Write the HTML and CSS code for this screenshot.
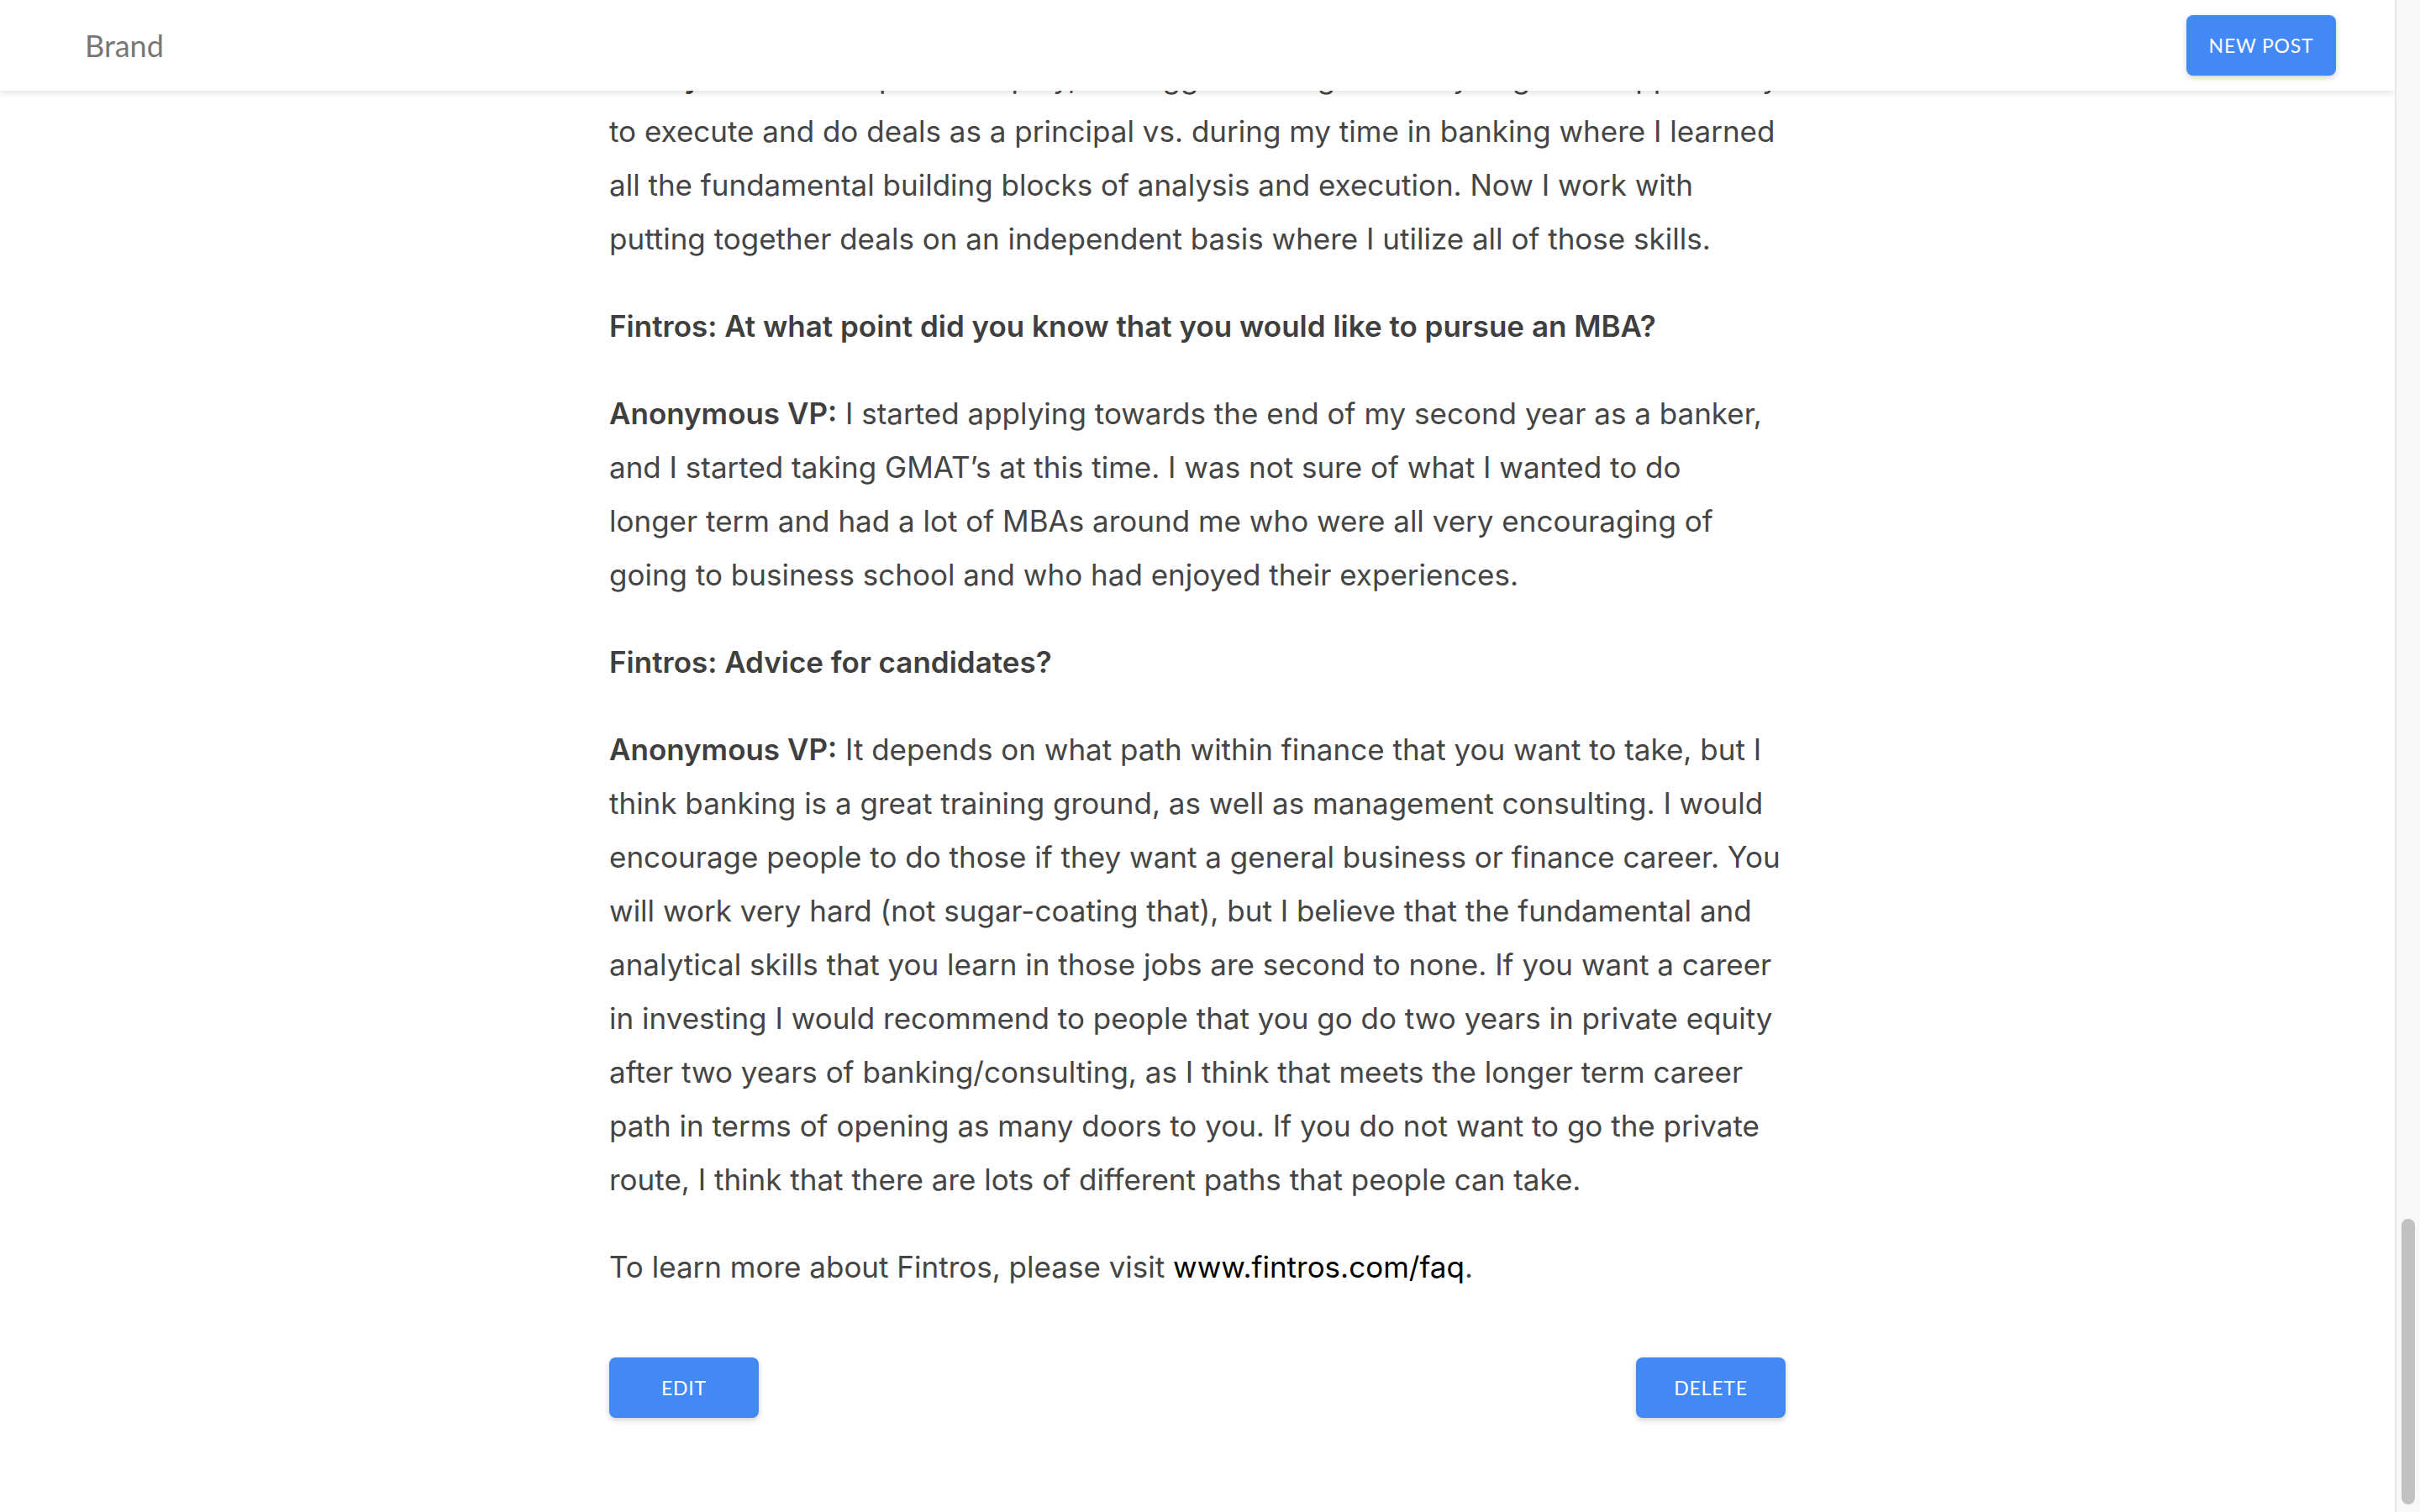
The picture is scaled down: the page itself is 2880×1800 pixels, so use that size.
FILE: index.html
```html
<!DOCTYPE html>
<html lang="en">
<head>
<meta charset="utf-8">
<title>Post</title>
<link rel="stylesheet" href="styles.css">
</head>
<body>
<div class="window">
  <div class="viewport">
    <header class="appbar">
      <div class="brand">Brand</div>
      <button class="btn">New Post</button>
    </header>
    <main class="article">
      <p><strong>Anonymous VP:</strong> In private equity, the biggest change is that you get the opportunity<br>to execute and do deals as a principal vs. during my time in banking where I learned<br>all the fundamental building blocks of analysis and execution. Now I work with<br>putting together deals on an independent basis where I utilize all of those skills.</p>
      <p class="question">Fintros: At what point did you know that you would like to pursue an MBA?</p>
      <p><strong>Anonymous VP:</strong> I started applying towards the end of my second year as a banker,<br>and I started taking GMAT’s at this time. I was not sure of what I wanted to do<br>longer term and had a lot of MBAs around me who were all very encouraging of<br>going to business school and who had enjoyed their experiences.</p>
      <p class="question">Fintros: Advice for candidates?</p>
      <p><strong>Anonymous VP:</strong> It depends on what path within finance that you want to take, but I<br>think banking is a great training ground, as well as management consulting. I would<br>encourage people to do those if they want a general business or finance career. You<br>will work very hard (not sugar-coating that), but I believe that the fundamental and<br>analytical skills that you learn in those jobs are second to none. If you want a career<br>in investing I would recommend to people that you go do two years in private equity<br>after two years of banking/consulting, as I think that meets the longer term career<br>path in terms of opening as many doors to you. If you do not want to go the private<br>route, I think that there are lots of different paths that people can take.</p>
      <p>To learn more about Fintros, please visit <a class="link" href="#">www.fintros.com/faq</a>.</p>
      <div class="actions">
        <button class="btn">Edit</button>
        <button class="btn">Delete</button>
      </div>
    </main>
  </div>
  <div class="scrollbar"><div class="thumb"></div></div>
</div>
</body>
</html>
```

FILE: styles.css
```css
html, body {
  margin: 0;
  padding: 0;
  height: 100%;
  overflow: hidden;
  background: #ffffff;
}

.window {
  display: flex;
  height: 1800px;
  width: 2880px;
}

.viewport {
  flex: 1;
  position: relative;
  height: 1800px;
  overflow: hidden;
  display: flex;
  flex-direction: column;
  justify-content: flex-end;
  background: #ffffff;
}

.appbar {
  position: absolute;
  top: 0;
  left: 0;
  right: 0;
  height: 108px;
  box-sizing: border-box;
  padding: 0 70px 0 101px;
  display: flex;
  align-items: center;
  justify-content: space-between;
  background: #ffffff;
  box-shadow: 0 2px 8px rgba(0, 0, 0, 0.13);
  z-index: 2;
}

.brand {
  font-family: Lato, "Open Sans", sans-serif;
  font-size: 36px;
  color: #777777;
  line-height: 1;
}

.btn {
  font-family: Lato, "Open Sans", sans-serif;
  font-size: 23px;
  font-weight: 400;
  letter-spacing: 0.8px;
  text-transform: uppercase;
  color: #ffffff;
  background: #4289f6;
  border: none;
  border-radius: 8px;
  min-width: 178px;
  height: 72px;
  padding: 0 24px;
  box-shadow: 0 2px 6px rgba(0, 0, 0, 0.14), 0 4px 10px rgba(0, 0, 0, 0.06);
  cursor: pointer;
}

.article {
  flex-shrink: 0;
  width: 1400px;
  margin: 0 auto;
  padding-bottom: 112px;
  font-family: Inter, Roboto, "Liberation Sans", sans-serif;
  font-size: 35px;
  letter-spacing: 0;
  line-height: 64px;
  color: #454545;
}

.article p {
  margin: 0 0 40px;
}

.article strong,
.article .question {
  font-weight: 600;
  letter-spacing: 0;
  color: #3f3f3f;
}

.link {
  color: #000000;
  text-decoration: none;
}

.actions {
  margin-top: 76px;
  display: flex;
  justify-content: space-between;
}

.scrollbar {
  width: 30px;
  flex-shrink: 0;
  box-sizing: border-box;
  border-left: 2px solid #e8e8e8;
  background: #f8f8f8;
  display: flex;
  flex-direction: column;
  justify-content: flex-end;
  padding: 0 6px 9px 6px;
}

.thumb {
  height: 340px;
  border-radius: 9px;
  background: #c1c1c1;
}
```
